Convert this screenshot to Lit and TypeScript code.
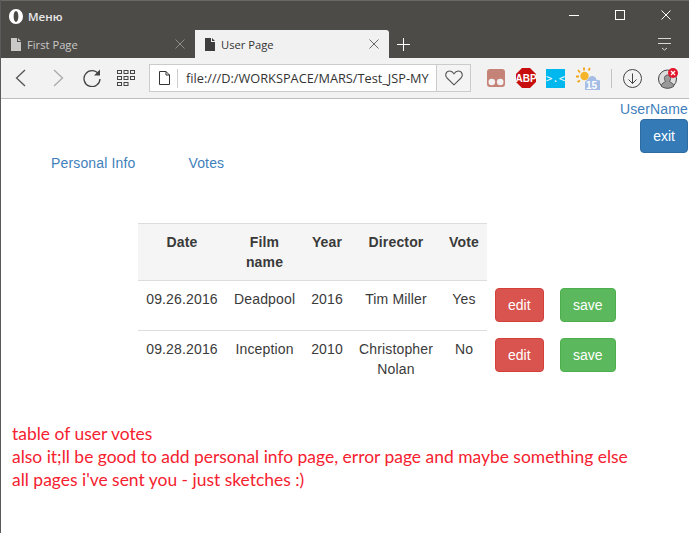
import { LitElement, html, css, svg } from 'lit';
import { customElement } from 'lit/decorators.js';

const votes = [
  { date: '09.26.2016', film: 'Deadpool', year: '2016', director: 'Tim Miller', vote: 'Yes' },
  { date: '09.28.2016', film: 'Inception', year: '2010', director: 'Christopher Nolan', vote: 'No' },
];

const docIcon = (fill: string) => svg`
  <svg width="10" height="13" viewBox="0 0 10 13"><path fill=${fill} d="M0 0h6v4h4v9H0zM7 0l3 3H7z"/></svg>`;

const closeIcon = (color: string, size = 10) => svg`
  <svg width=${size} height=${size} viewBox="0 0 10 10"><path stroke=${color} stroke-width="1" fill="none" d="M.5.5l9 9M9.5.5l-9 9"/></svg>`;

@customElement('app-root')
export class AppRoot extends LitElement {
  static styles = css`
    :host {
      display: block;
      width: 689px;
      height: 533px;
      box-sizing: border-box;
      border-left: 1px solid #5a5a5a;
      background: #fff;
      overflow: hidden;
      position: relative;
    }

    /* Browser chrome */
    .title {
      height: 30px;
      margin-left: -1px;
      padding-top: 2px;
      background: #4d4b48;
      border-top: 1px solid #6b6967;
      box-sizing: border-box;
      display: flex;
      align-items: center;
      color: #e8e8e8;
      font: 600 11.5px 'Open Sans', sans-serif;
    }
    .logo { margin: 0 5px 0 9px; display: block; }
    .winbtns { margin: -4px 0 0 auto; display: flex; align-items: center; }
    .winbtn { width: 46px; display: flex; justify-content: center; }
    .tabs {
      height: 28px;
      margin-left: -1px;
      background: #4d4b48;
      display: flex;
      align-items: stretch;
      font: 11.2px 'Open Sans', sans-serif;
    }
    .tab {
      width: 195px;
      box-sizing: border-box;
      display: flex;
      align-items: center;
      padding: 0 10px 0 11px;
      color: #c9c9c7;
    }
    .tab span { margin-left: 6px; flex: 1; }
    .tab.active {
      width: 194px;
      padding-left: 10px;
      background: #f1f1f1;
      color: #333;
      border-radius: 0 3px 0 0;
    }
    .plus { margin: 8px 0 0 8px; display: block; }
    .hamburger { margin: 8px 0 0 auto; padding-right: 18px; display: block; }
    .toolbar {
      height: 41px;
      box-sizing: border-box;
      background: #f2f2f2;
      border-bottom: 1px solid #bdbdbd;
      display: flex;
      align-items: center;
    }
    .toolbar > svg { display: block; flex: none; }
    .back { margin-left: 14px; }
    .forward { margin-left: 27px; }
    .reload { margin-left: 19px; }
    .grid { margin-left: 16px; }
    .address {
      margin-left: 14px;
      width: 322px;
      height: 28px;
      box-sizing: border-box;
      border: 1px solid #cbcbcb;
      background: #fff;
      display: flex;
      align-items: center;
      flex: none;
      font: 12.75px 'Open Sans', sans-serif;
      color: #333;
    }
    .address .page { margin-left: 9px; display: block; }
    .address .divider { width: 1px; height: 19px; background: #ccc; margin: 0 8px 0 7px; }
    .url { width: 250px; overflow: hidden; white-space: nowrap; }
    .heart {
      margin-left: auto;
      width: 33px;
      align-self: stretch;
      background: #f4f4f4;
      border-left: 1px solid #cbcbcb;
      display: flex;
      align-items: center;
      justify-content: center;
    }
    .ext1 { margin-left: 16px; }
    .ext2 { margin-left: 11px; }
    .ext3 { margin-left: 10px; }
    .ext4 { margin-left: 11px; }
    .sep { width: 1px; height: 19px; background: #c4c4c4; margin-left: 11px; flex: none; }
    .dl { margin-left: 11px; }
    .profile { margin-left: 16px; }

    /* Page */
    .page-body {
      font: 14px/20px 'Liberation Sans', Arial, sans-serif;
      letter-spacing: 0.15px;
      color: #3a3a3a;
      background: #fff;
    }
    .user {
      display: flex;
      flex-direction: column;
      align-items: flex-end;
      width: 687px;
    }
    a { color: #3f7fbb; text-decoration: none; }
    button {
      font: inherit;
      letter-spacing: 0;
      line-height: 20px;
      padding: 6px 12px;
      height: 34px;
      box-sizing: border-box;
      border: 1px solid transparent;
      border-radius: 4px;
      color: #fff;
      display: block;
    }
    .primary { background: #337ab7; border-color: #2e6da4; }
    .danger { background: #d9534f; border-color: #d43f3a; }
    .success { background: #5cb85c; border-color: #4cae4c; }
    nav { display: flex; gap: 53px; padding-left: 50px; }
    table {
      margin: 50px 0 0 137px;
      border-collapse: separate;
      border-spacing: 0;
      table-layout: fixed;
      width: 486px;
    }
    th, td {
      padding: 8px;
      text-align: center;
      vertical-align: top;
    }
    th { background: #f5f5f5; border-top: 1px solid #ddd; border-bottom: 1px solid #ddd; }
    th.blank { background: none; border: 0; }
    tr.lined td.data { border-bottom: 1px solid #ddd; }
    td.action { padding: 7px 8px 9px; }
    .c-date { width: 88px; }
    .c-film { width: 77px; }
    .c-year { width: 48px; }
    .c-dir { width: 90px; }
    .c-vote { width: 46px; }
    .c-edit { width: 65px; }
    .c-save { width: 72px; }
    .notes {
      margin: 35px 0 0 11px;
      font: 17.45px/23px Lato, sans-serif;
      letter-spacing: 0;
      color: #f5212f;
      white-space: nowrap;
    }
  `;

  private renderChrome() {
    return html`
      <div class="title">
        <svg class="logo" width="14" height="15" viewBox="0 0 13 14">
          <path fill="#fff" fill-rule="evenodd" d="M6.500 0C10.200 0 13 3.100 13 7s-2.800 7-6.500 7S0 10.900 0 7s2.800-7 6.500-7zm0 1.900C5.100 1.900 4.300 4.200 4.300 7s.8 5.100 2.200 5.100S8.700 9.800 8.700 7 7.900 1.900 6.500 1.900z"/>
        </svg>
        Меню
        <div class="winbtns">
          <div class="winbtn"><svg width="10" height="10"><path stroke="#fff" d="M0 5.500h10"/></svg></div>
          <div class="winbtn"><svg width="10" height="10"><rect x=".5" y=".5" width="9" height="9" fill="none" stroke="#fff"/></svg></div>
          <div class="winbtn">${closeIcon('#fff')}</div>
        </div>
      </div>
      <div class="tabs">
        <div class="tab">
          ${docIcon('#c9c9c7')}<span>First Page</span>${closeIcon('#8e8c8a')}
        </div>
        <div class="tab active">
          ${docIcon('#3d3d3d')}<span>User Page</span>${closeIcon('#666')}
        </div>
        <svg class="plus" width="13" height="13"><path stroke="#fff" d="M6.500 0v13M0 6.500h13" fill="none"/></svg>
        <svg class="hamburger" width="13" height="14" viewBox="0 0 13 14">
          <path stroke="#d8d8d8" fill="none" d="M0 .5h13M0 5.500h13M4 10l2.500 2L9 10"/>
        </svg>
      </div>
      <div class="toolbar">
        <svg class="back" width="11" height="18" viewBox="0 0 11 18"><path stroke="#555" stroke-width="1.300" fill="none" d="M10 1 1.500 9l8.500 8"/></svg>
        <svg class="forward" width="11" height="18" viewBox="0 0 11 18"><path stroke="#aaa" stroke-width="1.300" fill="none" d="M1 1l8.500 8L1 17"/></svg>
        <svg class="reload" width="18" height="18" viewBox="0 0 18 18">
          <path stroke="#444" stroke-width="1.300" fill="none" d="M15.500 5A8 8 0 1 0 17 10"/><path fill="#444" d="M17 .5v6h-6z"/>
        </svg>
        <svg class="grid" width="18" height="16" viewBox="0 0 18 16">
          <g fill="none" stroke="#444">
            <rect x=".5" y=".5" width="4" height="3"/><rect x="7" y=".5" width="4" height="3"/><rect x="13.500" y=".5" width="4" height="3"/>
            <rect x=".5" y="6.500" width="4" height="3"/><rect x="7" y="6.500" width="4" height="3"/><rect x="13.500" y="6.500" width="4" height="3"/>
            <rect x=".5" y="12.500" width="4" height="3"/><rect x="7" y="12.500" width="4" height="3"/>
          </g>
        </svg>
        <div class="address">
          <svg class="page" width="11" height="14" viewBox="0 0 11 14"><path stroke="#333" fill="#fff" d="M.5.500h6.500l3.500 3.500v9.500h-10zM7 .5V4h3.500"/></svg>
          <div class="divider"></div>
          <div class="url">file:///D:/WORKSPACE/MARS/Test_JSP-MY</div>
          <div class="heart">
            <svg width="18" height="16" viewBox="0 0 18 16"><path stroke="#555" stroke-width="1.100" fill="none" d="M9 14.800 2 8C-.5 5.300 1 1 4.600 1 6.600 1 8 2.200 9 3.800 10 2.200 11.400 1 13.400 1 17 1 18.500 5.300 16 8z"/></svg>
          </div>
        </div>
        <svg class="ext1" width="18" height="18" viewBox="0 0 18 18">
          <rect width="18" height="18" rx="3" fill="#c58276"/>
          <circle cx="4.800" cy="13" r="3.300" fill="#f2f2f2"/><circle cx="13.200" cy="13" r="3.300" fill="#f2f2f2"/>
        </svg>
        <svg class="ext2" width="20" height="20" viewBox="0 0 20 20">
          <path fill="#c70d0d" d="M6 0h8l6 6v8l-6 6H6l-6-6V6z"/>
          <text x="10" y="13.800" text-anchor="middle" fill="#fff" font-size="10" font-weight="700" font-family="Liberation Sans, sans-serif">ABP</text>
        </svg>
        <svg class="ext3" width="19" height="19" viewBox="0 0 19 19">
          <rect width="19" height="19" fill="#00b7ee"/>
          <text x="9.500" y="13" text-anchor="middle" fill="#fff" font-size="10.500" font-family="DejaVu Sans Mono, monospace">&gt;.&lt;</text>
        </svg>
        <svg class="ext4" width="24" height="24" viewBox="0 0 24 24">
          <path stroke="#f2a516" stroke-width="1.800" fill="none" d="M8 1.500v3M2 4l2 2.500M0 10.500h3M1.500 16l2.500-1.500M14 2l-1.500 2.500"/>
          <circle cx="8.500" cy="10" r="4.200" fill="#f5b52a"/>
          <path fill="#a5bde4" d="M9 24v-8l3-3c1-3 5-4 7-2 1 .5 1 1.500 1 2.500l4 1V24z"/>
          <text x="15.500" y="23" text-anchor="middle" fill="#fff" font-size="10" font-weight="700" font-family="Liberation Sans, sans-serif">15</text>
        </svg>
        <div class="sep"></div>
        <svg class="dl" width="19" height="19" viewBox="0 0 19 19">
          <circle cx="9.500" cy="9.500" r="9" fill="none" stroke="#444"/>
          <path stroke="#444" fill="none" d="M9.500 4.500v10M5.500 10.500l4 4 4-4"/>
        </svg>
        <svg class="profile" width="20" height="21" viewBox="0 0 20 21">
          <circle cx="9.500" cy="11" r="9" fill="#ddd" stroke="#444"/>
          <path fill="#999" stroke="#444" stroke-width=".8" d="M3 18c1-3 3-3.500 4.500-4.500-1.500-2-2-6 2-6.500 4 .5 3.500 4.500 2 6.500C13 14.500 15 15 16 18c-3 3-10 3-13 0z"/>
          <circle cx="15" cy="5" r="5" fill="#e5152c"/>
          <path stroke="#fff" stroke-width="1.300" d="M13 3l4 4M17 3l-4 4"/>
        </svg>
      </div>
    `;
  }

  render() {
    return html`
      ${this.renderChrome()}
      <div class="page-body">
        <div class="user">
          <a>UserName</a>
          <button class="primary">exit</button>
        </div>
        <nav>
          <a>Personal Info</a>
          <a>Votes</a>
        </nav>
        <table>
          <colgroup>
            <col class="c-date" /><col class="c-film" /><col class="c-year" /><col class="c-dir" />
            <col class="c-vote" /><col class="c-edit" /><col class="c-save" />
          </colgroup>
          <thead>
            <tr>
              <th>Date</th><th>Film name</th><th>Year</th><th>Director</th><th>Vote</th>
              <th class="blank"></th><th class="blank"></th>
            </tr>
          </thead>
          <tbody>
            ${votes.map(
              (v, i) => html`
                <tr class=${i < votes.length - 1 ? 'lined' : ''}>
                  <td class="data">${v.date}</td>
                  <td class="data">${v.film}</td>
                  <td class="data">${v.year}</td>
                  <td class="data">${v.director}</td>
                  <td class="data">${v.vote}</td>
                  <td class="action"><button class="danger">edit</button></td>
                  <td class="action"><button class="success">save</button></td>
                </tr>
              `,
            )}
          </tbody>
        </table>
        <div class="notes">
          table of user votes<br />
          also it;ll be good to add personal info page, error page and maybe something else<br />
          all pages i've sent you - just sketches :)
        </div>
      </div>
    `;
  }
}
